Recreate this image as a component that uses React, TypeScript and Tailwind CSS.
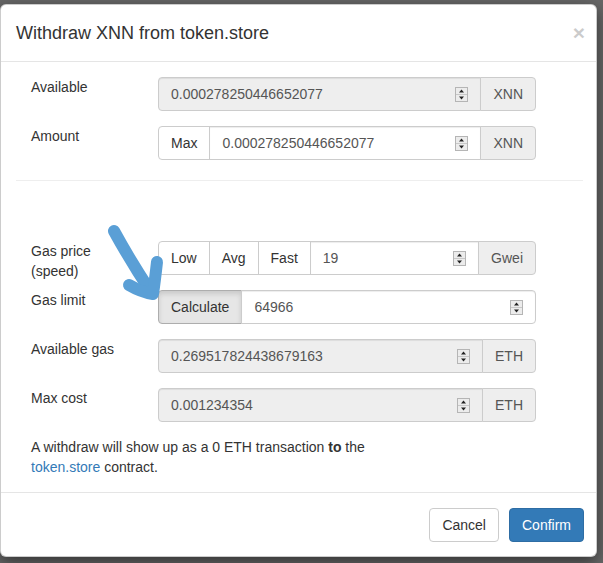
import React from "react";

function Spinner() {
    return (
        <svg width="13" height="15" viewBox="0 0 13 15" className="shrink-0">
            <rect x="0.5" y="0.5" width="12" height="14" fill="#ececec" stroke="#b5b5b5" />
            <line x1="1" y1="7.5" x2="12" y2="7.5" stroke="#c8c8c8" />
            <path d="M4 5.5 L6.5 2.5 L9 5.5 Z" fill="#222" />
            <path d="M4 9.5 L6.5 12.5 L9 9.5 Z" fill="#222" />
        </svg>
    );
}

function Field({ value, disabled = false, roundLeft = false, roundRight = false }: { value: string; disabled?: boolean; roundLeft?: boolean; roundRight?: boolean }) {
    return (
        <div
            className={
                "flex-1 -ml-px first:ml-0 h-[34px] flex items-center justify-between px-[12px] border border-[#ccc] text-[#555] " +
                (disabled ? "bg-[#eee] shadow-[inset_0_1px_1px_rgba(0,0,0,0.075)] " : "bg-white shadow-[inset_0_1px_1px_rgba(0,0,0,0.075)] ") +
                (roundLeft ? "rounded-l-[4px] " : "") +
                (roundRight ? "rounded-r-[4px]" : "")
            }
        >
            <span>{value}</span>
            <Spinner />
        </div>
    );
}

function Addon({ text }: { text: string }) {
    return (
        <div className="-ml-px h-[34px] flex items-center px-[12px] bg-[#eee] border border-[#ccc] rounded-r-[4px] text-[#555]">
            {text}
        </div>
    );
}

function Btn({ text, first = false, active = false }: { text: string; first?: boolean; active?: boolean }) {
    return (
        <div
            className={
                "h-[34px] flex items-center px-[12px] border text-[#333] " +
                (first ? "rounded-l-[4px] " : "-ml-px ") +
                (active
                    ? "bg-[#e6e6e6] border-[#adadad] shadow-[inset_0_3px_5px_rgba(0,0,0,0.125)]"
                    : "bg-white border-[#ccc]")
            }
        >
            {text}
        </div>
    );
}

function Row({ label, children }: { label: React.ReactNode; children: React.ReactNode }) {
    return (
        <div className="flex h-[34px] mb-[15px]">
            <div className="w-[142px] pl-[15px] shrink-0 leading-[20px] text-[#333]">{label}</div>
            <div className="w-[378px] flex">{children}</div>
        </div>
    );
}

export default function App() {
    return (
        <div className="w-[603px] h-[563px] bg-[#676767] pt-[5px] pl-[1px] relative overflow-hidden font-['Liberation_Sans',Arial,sans-serif] text-[14px] leading-[20px]">
            <div className="w-[597px] bg-white rounded-[6px] border border-black/20 shadow-[0_5px_15px_rgba(0,0,0,0.5)] -mt-px -ml-px">
                {/* Header */}
                <div className="h-[57px] px-[15px] py-[15px] border-b border-[#e5e5e5] flex justify-between items-start">
                    <h4 className="text-[18px] leading-[26px] text-[#333]">Withdraw XNN from token.store</h4>
                    <span className="text-[21px] font-bold leading-[21px] text-black opacity-20 mt-[2px] -mr-[4px]">×</span>
                </div>

                {/* Body */}
                <div className="p-[15px] pb-[15px]">
                    <Row label="Available">
                        <Field value="0.000278250446652077" disabled roundLeft />
                        <Addon text="XNN" />
                    </Row>
                    <Row label="Amount">
                        <Btn text="Max" first />
                        <Field value="0.000278250446652077" />
                        <Addon text="XNN" />
                    </Row>

                    <hr className="border-0 border-t border-[#eee] mt-[20px] mb-[60px] mr-[-2px]" />

                    <Row label={<>Gas price<br />(speed)</>}>
                        <Btn text="Low" first />
                        <Btn text="Avg" />
                        <Btn text="Fast" />
                        <Field value="19" />
                        <Addon text="Gwei" />
                    </Row>
                    <Row label="Gas limit">
                        <Btn text="Calculate" first active />
                        <Field value="64966" roundRight />
                    </Row>
                    <Row label="Available gas">
                        <Field value="0.269517824438679163" disabled roundLeft />
                        <Addon text="ETH" />
                    </Row>
                    <Row label="Max cost">
                        <Field value="0.001234354" disabled roundLeft />
                        <Addon text="ETH" />
                    </Row>

                    <p className="pl-[15px] mt-[1px] text-[#333]">
                        A withdraw will show up as a 0 ETH transaction <b>to</b> the
                        <br />
                        <span className="text-[#337ab7]">token.store</span> contract.
                    </p>
                </div>

                {/* Footer */}
                <div className="border-t border-[#e5e5e5] pl-[15px] pr-[12px] pt-[15px] pb-[14px] flex justify-end gap-[10px]">
                    <button className="h-[34px] px-[12px] bg-white border border-[#ccc] rounded-[4px] text-[#333]">Cancel</button>
                    <button className="h-[34px] px-[12px] bg-[#337ab7] border border-[#2e6da4] rounded-[4px] text-white">Confirm</button>
                </div>
            </div>

            {/* Hand-drawn arrow */}
            <svg className="absolute left-0 top-0 pointer-events-none" width="603" height="563">
                <g fill="none" stroke="#5a9fd6" strokeWidth="12" strokeLinecap="round" strokeLinejoin="round">
                    <path d="M114 231 Q131 262 151 292" />
                    <path d="M157 262 Q155 280 153 294 Q141 292 129 285" />
                </g>
            </svg>
        </div>
    );
}
